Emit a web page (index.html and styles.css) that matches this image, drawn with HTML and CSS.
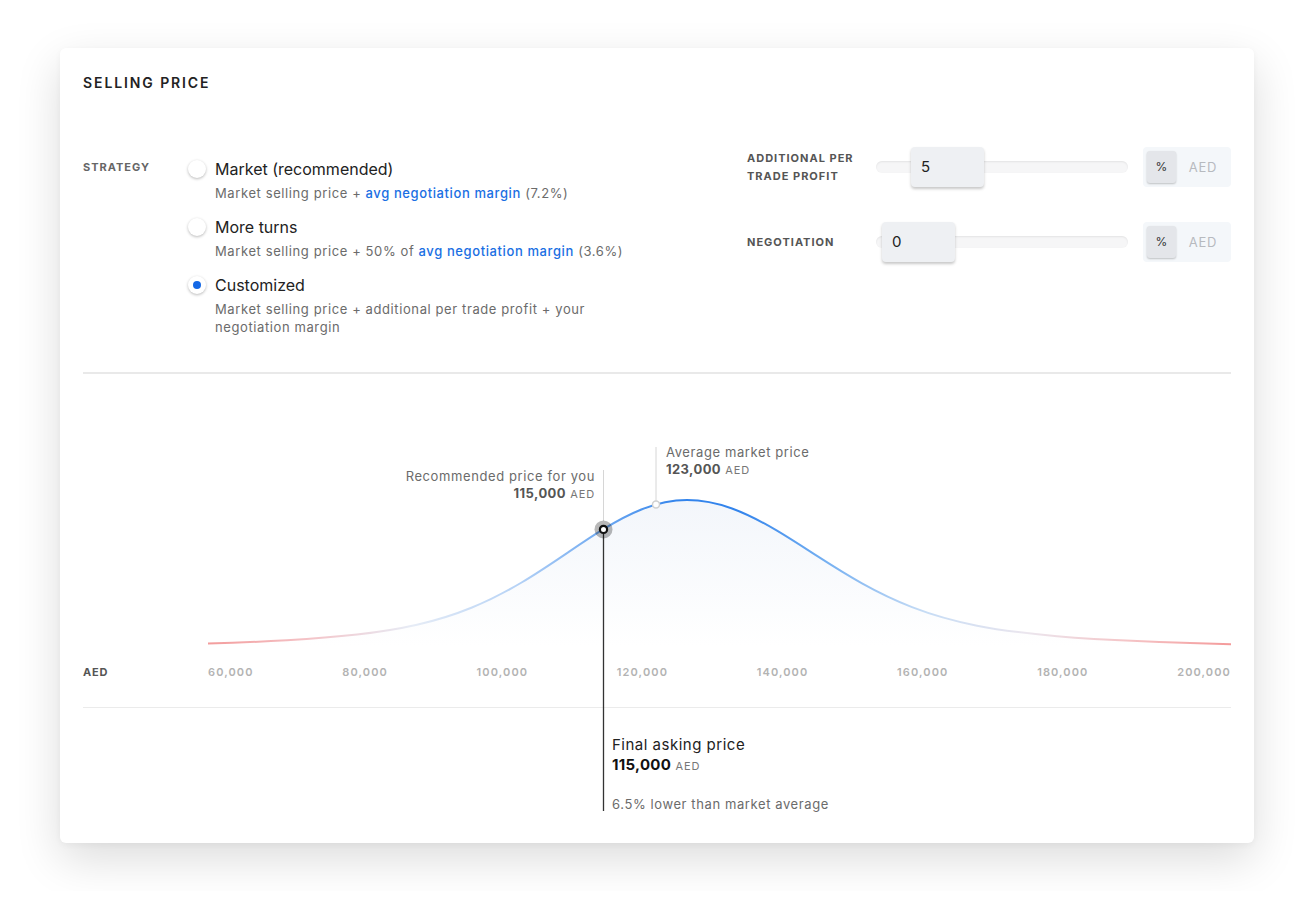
FILE: index.html
```html
<!DOCTYPE html>
<html lang="en">
<head>
    <meta charset="UTF-8" />
    <meta name="viewport" content="width=device-width, initial-scale=1" />
    <title>Selling price</title>
    <link rel="stylesheet" href="styles.css">
</head>
<body>
    <div class="card">
        <h2 class="card-title">SELLING PRICE</h2>

        <div class="settings">
            <div class="strategy">
                <div class="field-label">STRATEGY</div>
                <div class="options">
                    <div class="option">
                        <span class="radio"></span>
                        <div class="option-text">
                            <div class="option-title">Market (recommended)</div>
                            <div class="option-desc">Market selling price + <a class="link">avg negotiation margin</a> (7.2%)</div>
                        </div>
                    </div>
                    <div class="option">
                        <span class="radio"></span>
                        <div class="option-text">
                            <div class="option-title">More turns</div>
                            <div class="option-desc">Market selling price + 50% of <a class="link">avg negotiation margin</a> (3.6%)</div>
                        </div>
                    </div>
                    <div class="option">
                        <span class="radio checked"></span>
                        <div class="option-text">
                            <div class="option-title">Customized</div>
                            <div class="option-desc">Market selling price + additional per trade profit + your negotiation margin</div>
                        </div>
                    </div>
                </div>
            </div>

            <div class="controls">
                <div class="control-row">
                    <div class="control-label">ADDITIONAL PER<br>TRADE PROFIT</div>
                    <div class="slider">
                        <div class="track"></div>
                        <div class="thumb" style="left: 35px">5</div>
                    </div>
                    <div class="unit-toggle">
                        <span class="unit active">%</span>
                        <span class="unit">AED</span>
                    </div>
                </div>
                <div class="control-row">
                    <div class="control-label">NEGOTIATION</div>
                    <div class="slider">
                        <div class="track"></div>
                        <div class="thumb" style="left: 6px">0</div>
                    </div>
                    <div class="unit-toggle">
                        <span class="unit active">%</span>
                        <span class="unit">AED</span>
                    </div>
                </div>
            </div>
        </div>

        <div class="chart">
            <!-- viewBox uses page coordinates of the chart block -->
            <svg class="chart-svg" width="1148" height="470" viewBox="83 374 1148 470">
                <defs>
                    <linearGradient id="lineGrad" gradientUnits="userSpaceOnUse" x1="208" y1="0" x2="1231" y2="0">
                        <stop offset="0" stop-color="#f39c9c"/>
                        <stop offset="0.1" stop-color="#f4c4c8"/>
                        <stop offset="0.2" stop-color="#e6ecf6"/>
                        <stop offset="0.3" stop-color="#b7d3f6"/>
                        <stop offset="0.39" stop-color="#6aa6f0"/>
                        <stop offset="0.46" stop-color="#3384ec"/>
                        <stop offset="0.52" stop-color="#3384ec"/>
                        <stop offset="0.6" stop-color="#72aef1"/>
                        <stop offset="0.7" stop-color="#c6dcf5"/>
                        <stop offset="0.8" stop-color="#ebe6ee"/>
                        <stop offset="0.9" stop-color="#f5c4c6"/>
                        <stop offset="1" stop-color="#f49a9a"/>
                    </linearGradient>
                    <linearGradient id="fillGrad" x1="0" y1="0" x2="0" y2="1">
                        <stop offset="0" stop-color="#f3f6fb"/>
                        <stop offset="1" stop-color="#ffffff"/>
                    </linearGradient>
                    <path id="curve" d="M208,643.6 C234.33,642.79 260.67,641.75 287,640.24 C310.33,638.9 333.67,637.22 357,634.58 C377,632.31 397,629.33 417,624.77 C435.33,620.59 453.67,615.05 472,607.53 C488.67,600.7 505.33,592.18 522,582.26 C537,573.34 552,563.26 567,553.1 C579,544.98 591,536.82 603,529.43 C616,521.42 629,514.37 642,509.23 C657,503.31 672,500 687,500 C702,500 717,503 732,508.45 C747,513.9 762,521.78 777,530.7 C790.33,538.63 803.67,547.34 817,555.92 C832,565.58 847,575.02 862,583.39 C878.67,592.69 895.33,600.67 912,607.12 C933.67,615.51 955.33,621.39 977,625.66 C1003.67,630.91 1030.33,633.9 1057,636.15 C1083.67,638.4 1110.33,639.88 1137,641.08 C1168.33,642.49 1199.67,643.5 1231,644.25"/>
                </defs>
                <path d="M208,643.6 C234.33,642.79 260.67,641.75 287,640.24 C310.33,638.9 333.67,637.22 357,634.58 C377,632.31 397,629.33 417,624.77 C435.33,620.59 453.67,615.05 472,607.53 C488.67,600.7 505.33,592.18 522,582.26 C537,573.34 552,563.26 567,553.1 C579,544.98 591,536.82 603,529.43 C616,521.42 629,514.37 642,509.23 C657,503.31 672,500 687,500 C702,500 717,503 732,508.45 C747,513.9 762,521.78 777,530.7 C790.33,538.63 803.67,547.34 817,555.92 C832,565.58 847,575.02 862,583.39 C878.67,592.69 895.33,600.67 912,607.12 C933.67,615.51 955.33,621.39 977,625.66 C1003.67,630.91 1030.33,633.9 1057,636.15 C1083.67,638.4 1110.33,639.88 1137,641.08 C1168.33,642.49 1199.67,643.5 1231,644.25 L1231,646 L208,646 Z" fill="url(#fillGrad)"/>
                <use href="#curve" fill="none" stroke="url(#lineGrad)" stroke-width="2"/>
                <line x1="603.5" y1="470" x2="603.5" y2="521" stroke="#d6d6d6" stroke-width="1"/>
                <line x1="656" y1="447" x2="656" y2="501" stroke="#d6d6d6" stroke-width="1"/>
                <line x1="603.5" y1="530" x2="603.5" y2="811" stroke="#333" stroke-width="1.3"/>
                <circle cx="656" cy="504.6" r="3.5" fill="#fff" stroke="#d0d0d0" stroke-width="1.5"/>
                <circle cx="603.5" cy="529.4" r="9" fill="#000" fill-opacity="0.28"/>
                <circle cx="603.5" cy="529.4" r="3.6" fill="#fff" stroke="#111" stroke-width="2.2"/>
            </svg>

            <div class="note note-recommended">
                <div>Recommended price for you</div>
                <div><b>115,000</b> <small>AED</small></div>
            </div>
            <div class="note note-average">
                <div>Average market price</div>
                <div><b>123,000</b> <small>AED</small></div>
            </div>

            <div class="plot"></div>
            <div class="axis">
                <span class="axis-unit">AED</span>
                <div class="ticks">
                    <span>60,000</span>
                    <span>80,000</span>
                    <span>100,000</span>
                    <span>120,000</span>
                    <span>140,000</span>
                    <span>160,000</span>
                    <span>180,000</span>
                    <span>200,000</span>
                </div>
            </div>
            <div class="axis-line"></div>

            <div class="final">
                <div class="final-title">Final asking price</div>
                <div class="final-price"><b>115,000</b> <small>AED</small></div>
                <div class="final-note">6.5% lower than market average</div>
            </div>
        </div>
    </div>
</body>
</html>
```

FILE: styles.css
```css
* {
    box-sizing: border-box;
    margin: 0;
    padding: 0;
}
body {
    font-family: 'Inter', 'Liberation Sans', sans-serif;
    background: #fff;
    color: #222;
}
.card {
    width: 1194px;
    margin: 48px 60px;
    padding: 25px 23px 30px;
    background: #fff;
    border-radius: 6px;
    box-shadow: 0 16px 46px rgba(0, 0, 0, 0.14), 0 2px 6px rgba(0, 0, 0, 0.04);
}
.card-title {
    font-size: 14px;
    line-height: 20px;
    font-weight: 600;
    letter-spacing: 1.9px;
    color: #222;
}

/* strategy + sliders */
.settings {
    display: grid;
    grid-template-columns: 1fr 484px;
    margin-top: 54px;
    padding-bottom: 36px;
    border-bottom: 2px solid #e9e9e9;
}
.strategy {
    display: flex;
    padding-top: 10px;
}
.field-label, .control-label {
    font-size: 11px;
    font-weight: 700;
    letter-spacing: 1px;
    color: #666;
}
.field-label {
    width: 105px;
    line-height: 20px;
}
.options {
    display: flex;
    flex-direction: column;
    gap: 13px;
}
.option {
    display: flex;
    gap: 9px;
}
.radio {
    width: 18px;
    height: 18px;
    margin-top: 3px;
    border-radius: 50%;
    background: #fff;
    box-shadow: 0 1px 3px rgba(0, 0, 0, 0.28);
    display: flex;
    align-items: center;
    justify-content: center;
    flex-shrink: 0;
}
.radio.checked::after {
    content: '';
    width: 8px;
    height: 8px;
    border-radius: 50%;
    background: #1468e6;
}
.option-title {
    font-size: 16px;
    line-height: 24px;
    color: #222;
}
.option-desc {
    margin-top: 3px;
    width: 420px;
    font-size: 13px;
    line-height: 18px;
    letter-spacing: 0.6px;
    color: #6b6b6b;
}
.link {
    color: #1a6fe3;
    font-weight: 500;
}

.controls {
    display: flex;
    flex-direction: column;
    gap: 35px;
}
.control-row {
    display: flex;
    align-items: center;
    height: 40px;
}
.control-label {
    width: 129px;
    line-height: 18px;
    color: #555;
}
.slider {
    position: relative;
    width: 252px;
    height: 40px;
    display: flex;
    align-items: center;
}
.track {
    width: 100%;
    height: 12px;
    border-radius: 6px;
    background: #f6f6f7;
    box-shadow: inset 0 1px 2px rgba(0, 0, 0, 0.08);
}
.thumb {
    position: absolute;
    top: 0;
    width: 73px;
    height: 40px;
    padding-left: 10px;
    border-radius: 4px;
    background: #eef0f3;
    box-shadow: 0 2px 3px rgba(0, 0, 0, 0.22);
    font-size: 15px;
    line-height: 40px;
    color: #222;
}
.unit-toggle {
    margin-left: 15px;
    width: 88px;
    height: 40px;
    padding: 4px;
    display: flex;
    align-items: center;
    border-radius: 4px;
    background: #f4f7fa;
}
.unit {
    flex: 1;
    padding-left: 3px;
    font-size: 13px;
    letter-spacing: 0.8px;
    color: #b7babf;
    text-align: center;
}
.unit.active {
    flex: 0 0 29px;
    height: 32px;
    padding-left: 0;
    line-height: 32px;
    font-size: 12px;
    letter-spacing: 0;
    color: #333;
    background: #e4e6ea;
    border-radius: 3px;
    box-shadow: 0 1px 2px rgba(0, 0, 0, 0.22);
}

/* chart */
.chart {
    position: relative;
}
.chart-svg {
    position: absolute;
    top: 0;
    left: 0;
    pointer-events: none;
}
.note {
    position: absolute;
    font-size: 13px;
    line-height: 17px;
    letter-spacing: 0.6px;
    color: #6b6b6b;
}
.note b {
    color: #555;
    font-weight: 700;
    letter-spacing: 0.4px;
}
.note small, .final-price small {
    font-size: 11px;
    letter-spacing: 0.9px;
    color: #777;
}
.note-recommended {
    right: 636px;
    top: 94px;
    text-align: right;
}
.note-average {
    left: 583px;
    top: 70px;
}
.plot {
    height: 290px;
}
.axis {
    display: flex;
    font-size: 11px;
    line-height: 16px;
    font-weight: 600;
    letter-spacing: 1.1px;
}
.axis-unit {
    width: 125px;
    color: #555;
    font-weight: 700;
    letter-spacing: 0.8px;
}
.ticks {
    flex: 1;
    display: flex;
    justify-content: space-between;
    color: #b3b3b3;
}
.axis-line {
    margin-top: 27px;
    height: 1px;
    background: #ebebeb;
}
.final {
    padding: 27px 0 0 529px;
}
.final-title {
    font-size: 15px;
    line-height: 20px;
    letter-spacing: 0.5px;
    color: #222;
}
.final-price {
    font-size: 15px;
    line-height: 20px;
}
.final-price b {
    font-weight: 700;
    letter-spacing: 0.3px;
    color: #111;
}
.final-note {
    margin-top: 19px;
    font-size: 13px;
    line-height: 18px;
    letter-spacing: 0.6px;
    color: #6b6b6b;
}
```
